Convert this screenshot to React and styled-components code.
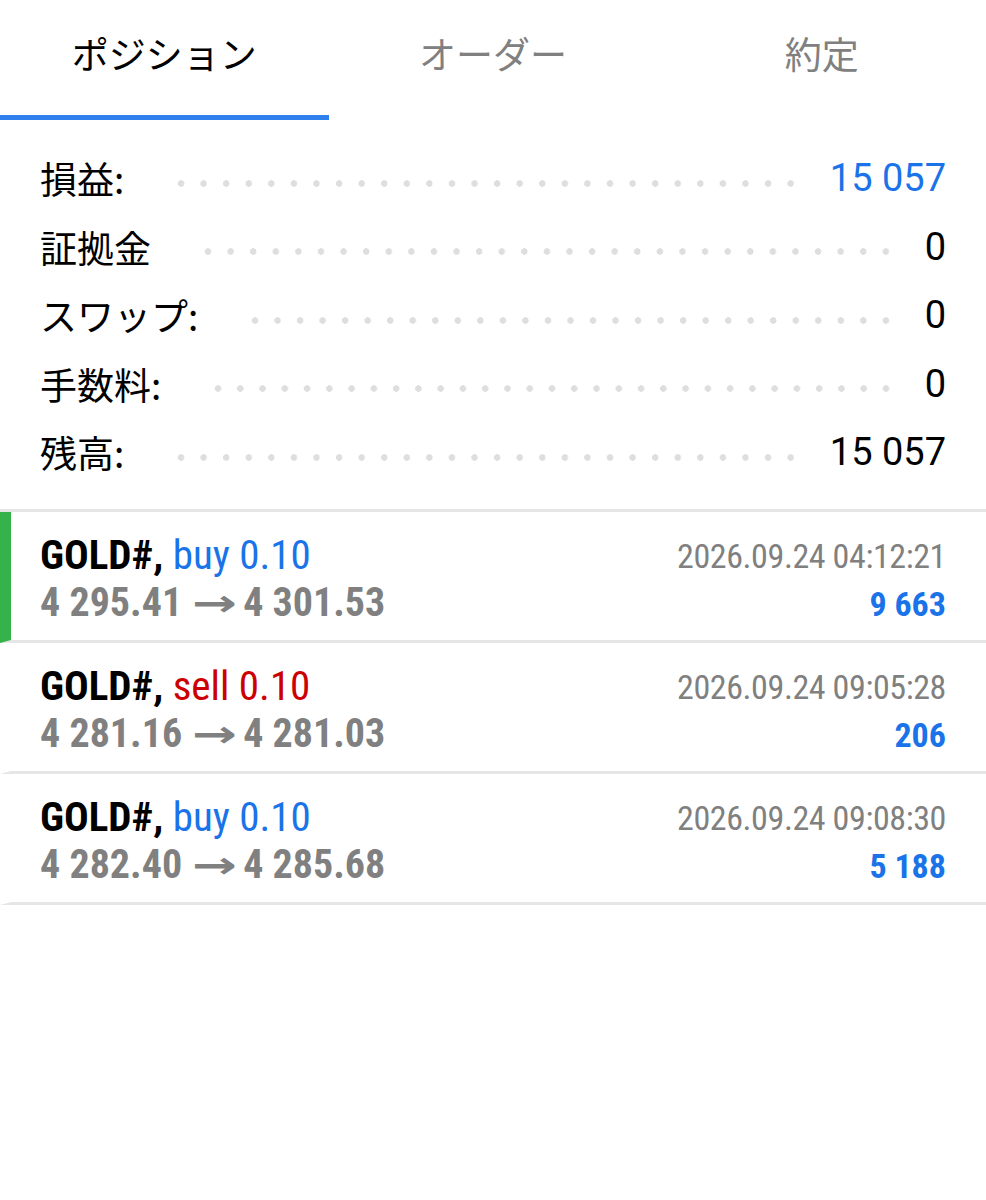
import styled, { createGlobalStyle } from "styled-components";

const GlobalStyle = createGlobalStyle`
    body {
        margin: 0;
        background: #ffffff;
        font-family: "Roboto", "Noto Sans CJK JP", sans-serif;
    }
`;

const summary = [
    { label: "損益:", value: "15 057", blue: true },
    { label: "証拠金", value: "0" },
    { label: "スワップ:", value: "0" },
    { label: "手数料:", value: "0" },
    { label: "残高:", value: "15 057" },
];

const trades = [
    { side: "buy", lots: "0.10", open: "4 295.41", close: "4 301.53", time: "2026.09.24 04:12:21", profit: "9 663", marked: true },
    { side: "sell", lots: "0.10", open: "4 281.16", close: "4 281.03", time: "2026.09.24 09:05:28", profit: "206" },
    { side: "buy", lots: "0.10", open: "4 282.40", close: "4 285.68", time: "2026.09.24 09:08:30", profit: "5 188" },
];

function App() {
    return (
        <Page>
            <GlobalStyle />
            <Tabs>
                <Tab active>ポジション</Tab>
                <Tab>オーダー</Tab>
                <Tab>約定</Tab>
            </Tabs>
            <Summary>
                {summary.map((row) => (
                    <SummaryRow key={row.label}>
                        <Label>{row.label}</Label>
                        <Leader />
                        <Value blue={row.blue}>{row.value}</Value>
                    </SummaryRow>
                ))}
            </Summary>
            <TradeList>
                {trades.map((t) => (
                    <TradeRow key={t.time} marked={t.marked}>
                        <TradeLeft>
                            <Symbol>
                                GOLD#, <Side sell={t.side === "sell"}>{t.side} {t.lots}</Side>
                            </Symbol>
                            <Prices>
                                {t.open}<Arrow>→</Arrow>{t.close}
                            </Prices>
                        </TradeLeft>
                        <TradeRight>
                            <Time>{t.time}</Time>
                            <Profit>{t.profit}</Profit>
                        </TradeRight>
                    </TradeRow>
                ))}
            </TradeList>
        </Page>
    );
}

export default App;

const Page = styled.div`
    width: 986px;
    min-height: 1200px;
    background: #ffffff;
`;

// tabs
const Tabs = styled.div`
    display: grid;
    grid-template-columns: repeat(3, 1fr);
    height: 120px;
`;

const Tab = styled.div`
    display: flex;
    align-items: center;
    justify-content: center;
    padding-bottom: 10px;
    box-sizing: border-box;
    font-family: "Noto Sans CJK JP", sans-serif;
    font-size: 37px;
    color: ${(p) => (p.active ? "#000000" : "#808080")};
    border-bottom: 5px solid ${(p) => (p.active ? "#2f80ed" : "transparent")};
`;

// summary block
const Summary = styled.div`
    padding: 24px 40px 22px;
    display: flex;
    flex-direction: column;
`;

const SummaryRow = styled.div`
    display: flex;
    align-items: center;
    height: 68.5px;
`;

const Label = styled.span`
    font-family: "Noto Sans CJK JP", sans-serif;
    font-size: 37px;
    color: #000000;
`;

const Leader = styled.div`
    flex: 1;
    height: 7px;
    margin: 10px 28px 0 46px;
    background-image: radial-gradient(circle, #dedede 3px, transparent 3.5px);
    background-size: 22px 7px;
    background-repeat: space no-repeat;
`;

const Value = styled.span`
    font-family: "Roboto", sans-serif;
    font-size: 38px;
    color: ${(p) => (p.blue ? "#1a73e8" : "#000000")};
`;

// trades
const TradeList = styled.div`
    border-top: 3px solid #e6e6e6;
`;

const TradeRow = styled.div`
    display: flex;
    justify-content: space-between;
    align-items: flex-start;
    height: 131px;
    box-sizing: border-box;
    padding: 19px 40px 0 29px;
    border-left: 11px solid ${(p) => (p.marked ? "#36b24a" : "transparent")};
    border-bottom: 3px solid #e6e6e6;
    font-family: "Roboto Condensed", "Roboto", sans-serif;
`;

const TradeLeft = styled.div`
    display: flex;
    flex-direction: column;
`;

const Symbol = styled.div`
    font-size: 41px;
    line-height: 48px;
    font-weight: 700;
    color: #000000;
`;

const Side = styled.span`
    font-weight: 400;
    color: ${(p) => (p.sell ? "#cc0000" : "#1a73e8")};
`;

const Prices = styled.div`
    font-size: 40px;
    line-height: 48px;
    font-weight: 700;
    color: #808080;
`;

const Arrow = styled.span`
    display: inline-block;
    font-family: "DejaVu Sans", sans-serif;
    font-size: 37px;
    line-height: 40px;
    font-weight: 700;
    transform: scaleX(1.45);
    margin: 0 13px 0 17px;
`;

const TradeRight = styled.div`
    display: flex;
    flex-direction: column;
    align-items: flex-end;
`;

const Time = styled.div`
    font-size: 34px;
    letter-spacing: -0.4px;
    line-height: 50px;
    color: #808080;
`;

const Profit = styled.div`
    font-size: 34px;
    line-height: 46px;
    font-weight: 700;
    color: #1a73e8;
`;
